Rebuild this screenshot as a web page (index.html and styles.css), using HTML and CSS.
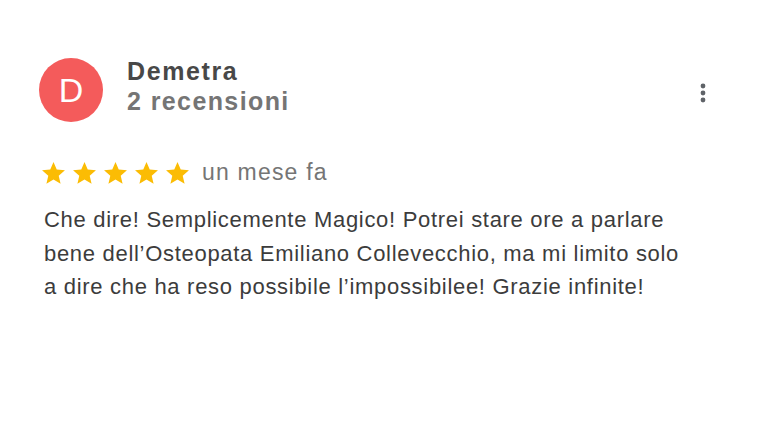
FILE: index.html
```html
<!DOCTYPE html>
<html lang="it">
<head>
    <meta charset="UTF-8">
    <meta name="viewport" content="width=device-width, initial-scale=1.0">
    <title>Recensione - Demetra</title>
    <link rel="stylesheet" href="styles.css">
</head>
<body>
    <div class="review">
        <div class="review-head">
            <div class="avatar">D</div>
            <div class="author">
                <div class="name">Demetra</div>
                <div class="count">2 recensioni</div>
            </div>
            <div class="menu">
                <svg width="24" height="24" viewBox="0 0 24 24">
                    <circle cx="12" cy="5" r="2.4" fill="#5f6368"/>
                    <circle cx="12" cy="12" r="2.4" fill="#5f6368"/>
                    <circle cx="12" cy="19" r="2.4" fill="#5f6368"/>
                </svg>
            </div>
        </div>
        <div class="rating">
            <div class="stars">
                <svg viewBox="0 0 24 24"><path d="M12 1.8l3.1 7.3 7.9.7-6 5.2 1.8 7.7L12 18.6l-6.8 4.1 1.8-7.7-6-5.2 7.9-.7z" fill="#fbbc04"/></svg>
                <svg viewBox="0 0 24 24"><path d="M12 1.8l3.1 7.3 7.9.7-6 5.2 1.8 7.7L12 18.6l-6.8 4.1 1.8-7.7-6-5.2 7.9-.7z" fill="#fbbc04"/></svg>
                <svg viewBox="0 0 24 24"><path d="M12 1.8l3.1 7.3 7.9.7-6 5.2 1.8 7.7L12 18.6l-6.8 4.1 1.8-7.7-6-5.2 7.9-.7z" fill="#fbbc04"/></svg>
                <svg viewBox="0 0 24 24"><path d="M12 1.8l3.1 7.3 7.9.7-6 5.2 1.8 7.7L12 18.6l-6.8 4.1 1.8-7.7-6-5.2 7.9-.7z" fill="#fbbc04"/></svg>
                <svg viewBox="0 0 24 24"><path d="M12 1.8l3.1 7.3 7.9.7-6 5.2 1.8 7.7L12 18.6l-6.8 4.1 1.8-7.7-6-5.2 7.9-.7z" fill="#fbbc04"/></svg>
            </div>
            <span class="date">un mese fa</span>
        </div>
        <p class="text">Che dire! Semplicemente Magico! Potrei stare ore a parlare bene dell’Osteopata Emiliano Collevecchio, ma mi limito solo a dire che ha reso possibile l’impossibilee! Grazie infinite!</p>
    </div>
</body>
</html>
```

FILE: styles.css
```css
body {
    margin: 0;
    background: #fff;
    font-family: "Liberation Sans", Arial, sans-serif;
    color: #3c4043;
}
.review {
    width: 768px;
    height: 433px;
    box-sizing: border-box;
    padding: 58px 40px 0 39px;
}
.review-head {
    display: flex;
    align-items: flex-start;
}
.avatar {
    width: 64px;
    height: 64px;
    border-radius: 50%;
    background: #f45b5b;
    color: #fff;
    font-size: 34px;
    line-height: 64px;
    text-align: center;
    flex-shrink: 0;
}
.author {
    margin-left: 24px;
    margin-top: -2px;
    flex: 1;
}
.name {
    font-size: 25px;
    font-weight: bold;
    letter-spacing: 1.6px;
    color: #484848;
    line-height: 30px;
}
.count {
    font-size: 25px;
    font-weight: bold;
    letter-spacing: 1.4px;
    color: #757575;
    line-height: 30px;
}
.menu {
    margin-top: 23px;
    margin-right: 13px;
}
.rating {
    display: flex;
    align-items: center;
    margin-top: 37px;
    margin-left: 2px;
}
.stars {
    display: flex;
    gap: 6px;
}
.stars svg {
    width: 25px;
    height: 25px;
}
.date {
    margin-left: 12px;
    font-size: 23px;
    letter-spacing: 1.2px;
    color: #757575;
}
.text {
    margin: 17px 0 0 5px;
    width: 646px;
    font-size: 22px;
    letter-spacing: 0.7px;
    line-height: 33.5px;
    color: #3c3c3c;
}
```
